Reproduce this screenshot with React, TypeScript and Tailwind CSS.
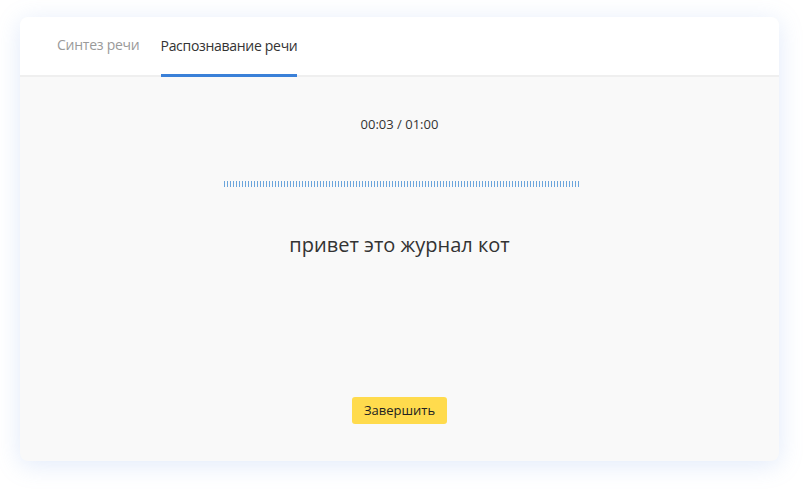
import React from "react";

export default function App() {
  const bars = Array.from({ length: 119 });
  return (
    <div className="w-[807px] h-[490px] bg-white pt-[17px] px-[20px] overflow-hidden" style={{ fontFamily: '"Open Sans", "Noto Sans", sans-serif' }}>
      <div className="w-[759px] h-[444px] rounded-[8px] bg-[#f9f9f9] overflow-hidden flex flex-col shadow-[0_4px_24px_rgba(120,160,230,0.22)]">
        <div className="h-[60px] bg-white border-b-2 border-[#efefef] flex items-stretch pl-[37px] gap-[21px] shrink-0">
          <div className="flex items-center text-[14px] tracking-[-0.25px] text-[#9a9a9a] pb-[3px]">Синтез речи</div>
          <div className="flex items-center text-[14px] tracking-[-0.3px] text-[#333] pb-[3px] border-b-[3px] border-[#3a80d8] -mb-[2px] pt-[3px]">Распознавание речи</div>
        </div>
        <div className="flex-1 flex flex-col items-center">
          <div className="mt-[38px] text-[13px] text-[#333] leading-[18px]">00:03 / 01:00</div>
          <div className="mt-[48px] ml-[4px] flex gap-[2px] h-[6px]">
            {bars.map((_, i) => (
              <div key={i} className="w-[1px] h-[6px] bg-[#6ba5dc]" />
            ))}
          </div>
          <div className="mt-[44px] text-[20px] text-[#333] leading-[28px]">привет это журнал кот</div>
          <button className="mt-[138px] h-[27px] w-[95px] rounded-[3px] bg-[#ffdb4d] text-[13px] text-[#222]">Завершить</button>
        </div>
      </div>
    </div>
  );
}
